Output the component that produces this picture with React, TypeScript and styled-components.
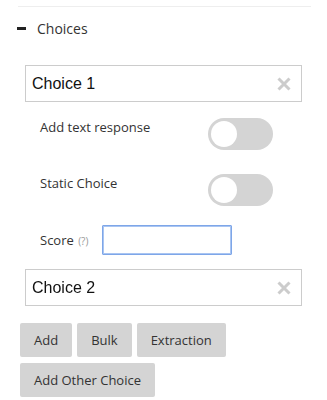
import styled, { createGlobalStyle } from 'styled-components';

const GlobalStyle = createGlobalStyle`
  body {
    margin: 0;
    background: #fff;
    font-family: "Open Sans", "Noto Sans", sans-serif;
    color: #333;
  }
`;

const choices = ['Choice 1', 'Choice 2'];

const App = () => {
  return (
    <>
      <GlobalStyle />
      <Panel>
        <Divider />
        <Header>
          <Dash />
          <Title>Choices</Title>
        </Header>
        <ChoiceBox>
          <ChoiceText>{choices[0]}</ChoiceText>
          <CloseIcon />
        </ChoiceBox>
        <Options>
          <OptionRow $space={24}>
            <Label>Add text response</Label>
            <Toggle />
          </OptionRow>
          <OptionRow $space={19}>
            <Label>Static Choice</Label>
            <Toggle />
          </OptionRow>
          <ScoreRow>
            <Label>
              Score <Hint>(?)</Hint>
            </Label>
            <ScoreInput defaultValue="" autoFocus />
          </ScoreRow>
        </Options>
        <ChoiceBox $last>
          <ChoiceText>{choices[1]}</ChoiceText>
          <CloseIcon />
        </ChoiceBox>
        <ButtonsContainer>
          <Button>Add</Button>
          <Button>Bulk</Button>
          <Button>Extraction</Button>
          <Button>Add Other Choice</Button>
        </ButtonsContainer>
      </Panel>
    </>
  );
};

const CloseIcon = () => (
  <svg width="14" height="14" viewBox="0 0 14 14">
    <path d="M1.5 1.5 L12.5 12.5 M12.5 1.5 L1.5 12.5" stroke="#cccccc" strokeWidth="3" />
  </svg>
);

export default App;

const Panel = styled.div`
  width: 327px;
  padding: 6px 0 0 0;
  box-sizing: border-box;
`;

const Divider = styled.div`
  margin-left: 18px;
  width: 293px;
  height: 1px;
  background: #eeeeee;
`;

const Header = styled.div`
  display: flex;
  align-items: center;
  height: 20px;
  margin: 11px 0 0 17px;
`;

const Dash = styled.span`
  width: 9px;
  height: 3px;
  background: #222;
  margin-right: 11px;
`;

const Title = styled.span`
  font-size: 14px;
  color: #333;
`;

const ChoiceBox = styled.div<{ $last?: boolean }>`
  display: flex;
  align-items: center;
  justify-content: space-between;
  box-sizing: border-box;
  width: 277px;
  height: 37px;
  margin: ${(p) => (p.$last ? '14px' : '27px')} 0 0 25px;
  padding: 0 10px 0 6px;
  border: 1px solid #cccccc;
`;

const ChoiceText = styled.span`
  font-family: "Liberation Sans", Arial, sans-serif;
  font-size: 16px;
  color: #111;
`;

const Options = styled.div`
  display: flex;
  flex-direction: column;
  margin: 16px 0 0 40px;
`;

const OptionRow = styled.div<{ $space: number }>`
  display: grid;
  grid-template-columns: 168px 65px;
  align-items: start;
  height: 32px;
  margin-bottom: ${(p) => p.$space}px;
`;

const Label = styled.span`
  font-size: 13px;
  line-height: 18px;
  color: #333;
  white-space: nowrap;
`;

const Hint = styled.span`
  font-size: 10px;
  color: #999;
  margin-left: 1px;
`;

const Toggle = styled.span`
  position: relative;
  display: block;
  width: 65px;
  height: 32px;
  border-radius: 16px;
  background: #d4d4d4;

  &::after {
    content: '';
    position: absolute;
    left: 3px;
    top: 3px;
    width: 26px;
    height: 26px;
    border-radius: 50%;
    background: #fff;
  }
`;

const ScoreRow = styled.div`
  display: grid;
  grid-template-columns: 62px 130px;
  align-items: center;
`;

const ScoreInput = styled.input`
  box-sizing: border-box;
  width: 130px;
  height: 30px;
  margin: 0;
  padding: 0 6px;
  border: 1px solid #7ea6e8;
  border-radius: 1px;
  outline: 1px solid #a9c5f2;
  outline-offset: -2px;
  font-family: "Liberation Sans", Arial, sans-serif;
  font-size: 14px;
  caret-color: #333;
`;

const ButtonsContainer = styled.div`
  display: flex;
  flex-wrap: wrap;
  gap: 6px 5px;
  width: 220px;
  margin: 17px 0 0 20px;
`;

const Button = styled.button`
  height: 34px;
  padding: 0 14px;
  background-color: #d4d4d4;
  color: #333;
  border: none;
  border-radius: 2px;
  font-family: "Open Sans", "Noto Sans", sans-serif;
  font-size: 13px;
  cursor: pointer;

  &:hover {
    background-color: #c8c8c8;
  }
`;
